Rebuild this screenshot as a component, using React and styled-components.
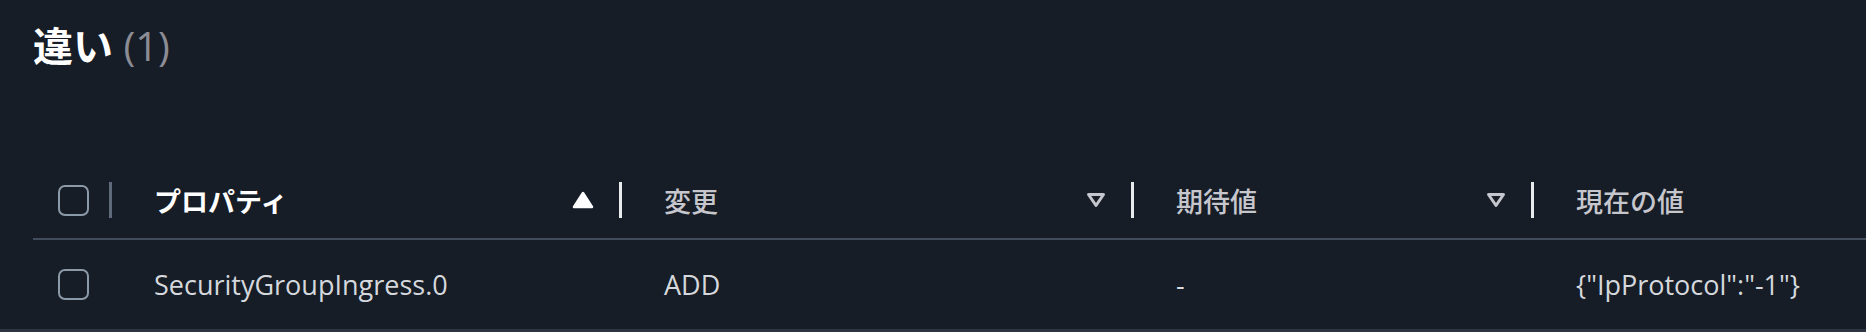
import React from 'react';
import styled, { createGlobalStyle } from 'styled-components';

const GlobalStyle = createGlobalStyle`
  html, body {
    margin: 0;
    padding: 0;
    background: #161d26;
  }
  body {
    font-family: "Open Sans", "Noto Sans CJK JP", sans-serif;
    color: #d5d8dd;
  }
`;

const columns = [
  { key: 'property', label: 'プロパティ', sort: 'asc' },
  { key: 'change', label: '変更', sort: 'none' },
  { key: 'expected', label: '期待値', sort: 'none' },
  { key: 'current', label: '現在の値' },
];

const rows = [
  {
    property: 'SecurityGroupIngress.0',
    change: 'ADD',
    expected: '-',
    current: '{"IpProtocol":"-1"}',
  },
];

const SortIcon = ({ dir }) =>
  dir === 'asc' ? (
    <svg width="22" height="18" viewBox="0 0 22 18">
      <polygon
        points="11,2 20,16 2,16"
        fill="#ffffff"
        stroke="#ffffff"
        strokeWidth="2.5"
        strokeLinejoin="round"
      />
    </svg>
  ) : (
    <svg width="20" height="16" viewBox="0 0 20 16">
      <polygon
        points="2.5,2.5 17.5,2.5 10,13.5"
        fill="none"
        stroke="#c6c6cd"
        strokeWidth="3"
        strokeLinejoin="round"
      />
    </svg>
  );

class App extends React.Component {
  render() {
    return (
      <>
        <GlobalStyle />
        <Page>
          <Title>
            違い <Count>(1)</Count>
          </Title>
          <Table>
            <HeaderRow>
              <CheckCell>
                <Checkbox />
                <Divider $muted />
              </CheckCell>
              {columns.map((col) => (
                <HeaderCell key={col.key}>
                  <HeaderLabel $active={col.sort === 'asc'}>{col.label}</HeaderLabel>
                  {col.sort && (
                    <>
                      <SortSlot>
                        <SortIcon dir={col.sort} />
                      </SortSlot>
                      <Divider />
                    </>
                  )}
                </HeaderCell>
              ))}
            </HeaderRow>
            {rows.map((row) => (
              <BodyRow key={row.property}>
                <CheckCell>
                  <Checkbox />
                </CheckCell>
                {columns.map((col) => (
                  <BodyCell key={col.key}>{row[col.key]}</BodyCell>
                ))}
              </BodyRow>
            ))}
          </Table>
        </Page>
      </>
    );
  }
}

export default App;

const Page = styled.div`
  width: 1866px;
  height: 332px;
  box-sizing: border-box;
  border-bottom: 3px solid #2b3440;
  overflow: hidden;
`;

const Title = styled.h2`
  margin: 0;
  padding: 22px 0 0 33px;
  height: 48px;
  line-height: 48px;
  font-size: 40px;
  font-weight: 700;
  color: #ffffff;
`;

const Count = styled.span`
  font-weight: 400;
  color: #8c8c94;
`;

const Table = styled.div`
  margin-top: 92px;
  margin-left: 33px;
`;

const Grid = styled.div`
  display: grid;
  grid-template-columns: 79px 510px 512px 400px 1fr;
`;

const HeaderRow = styled(Grid)`
  height: 76px;
  border-bottom: 2px solid #414d5c;
  align-items: center;
`;

const BodyRow = styled(Grid)`
  height: 89px;
  align-items: center;
`;

const CheckCell = styled.div`
  display: flex;
  align-items: center;
  justify-content: space-between;
  padding-left: 25px;
`;

const Checkbox = styled.span`
  display: block;
  width: 31px;
  height: 31px;
  box-sizing: border-box;
  border: 2.5px solid #8c99a8;
  border-radius: 7px;
`;

const HeaderCell = styled.div`
  display: flex;
  align-items: center;
  padding-left: 42px;
`;

const HeaderLabel = styled.span`
  flex: 1;
  font-size: 27px;
  font-weight: ${(p) => (p.$active ? 700 : 500)};
  color: ${(p) => (p.$active ? '#ffffff' : '#c6c6cd')};
`;

const SortSlot = styled.span`
  display: flex;
  margin-right: 25px;
`;

const Divider = styled.span`
  display: block;
  width: 3px;
  height: 36px;
  background: ${(p) => (p.$muted ? '#5f6b7a' : '#e9ebed')};
`;

const BodyCell = styled.div`
  padding-left: 42px;
  font-size: 27px;
  color: #d5d8dd;
  white-space: nowrap;
`;
